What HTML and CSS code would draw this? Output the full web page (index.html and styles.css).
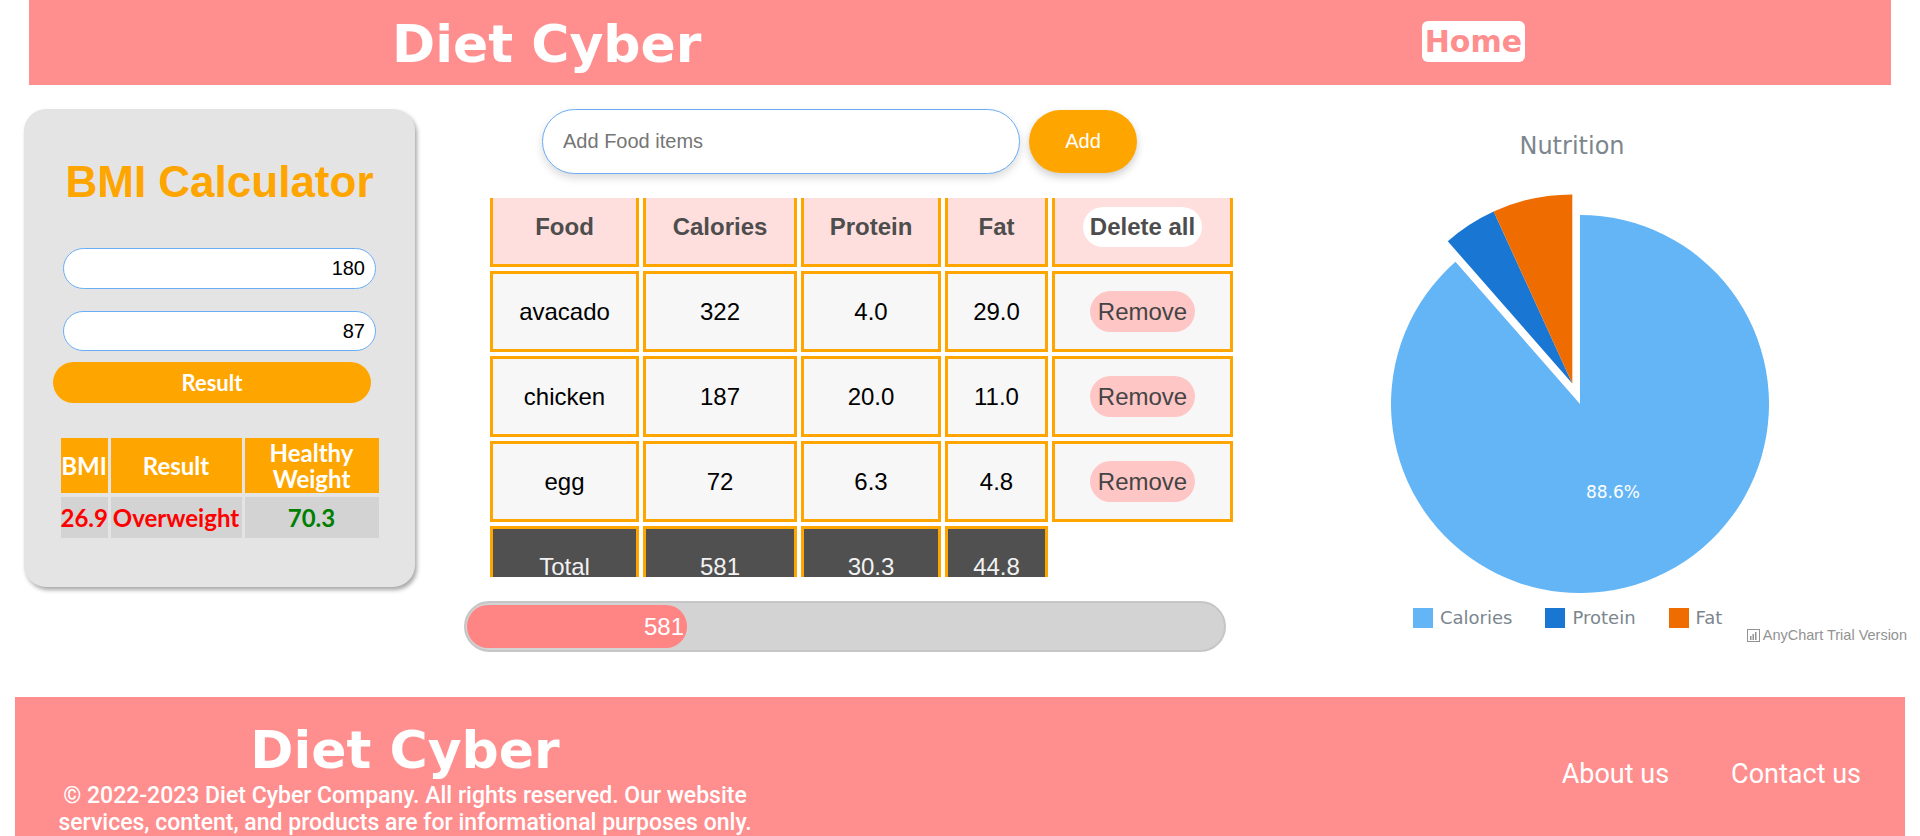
FILE: index.html
```html
<!DOCTYPE html>
<html lang="en">
<head>
<meta charset="utf-8">
<title>Diet Cyber</title>
<link rel="stylesheet" href="styles.css">
</head>
<body>
<header class="topbar">
  <h1 class="brand">Diet Cyber</h1>
  <a class="home-link" href="#">Home</a>
</header>

<main class="main">
  <section class="bmi-card">
    <h2 class="bmi-title">BMI Calculator</h2>
    <input class="bmi-input" type="text" value="180">
    <input class="bmi-input bmi-input-2" type="text" value="87">
    <button class="result-btn">Result</button>
    <table class="bmi-table">
      <tr><th class="c-bmi">BMI</th><th class="c-res">Result</th><th class="c-hw">Healthy Weight</th></tr>
      <tr><td class="red">26.9</td><td class="red">Overweight</td><td class="green">70.3</td></tr>
    </table>
  </section>

  <section class="food-col">
    <div class="food-form">
      <input class="food-input" type="text" placeholder="Add Food items">
      <button class="add-btn">Add</button>
    </div>
    <div class="table-wrap">
      <table class="food-table">
        <tr>
          <th class="w-food">Food</th>
          <th class="w-cal">Calories</th>
          <th class="w-pro">Protein</th>
          <th class="w-fat">Fat</th>
          <th class="w-del"><button class="delete-btn">Delete all</button></th>
        </tr>
        <tr><td>avacado</td><td>322</td><td>4.0</td><td>29.0</td><td><button class="remove-btn">Remove</button></td></tr>
        <tr><td>chicken</td><td>187</td><td>20.0</td><td>11.0</td><td><button class="remove-btn">Remove</button></td></tr>
        <tr><td>egg</td><td>72</td><td>6.3</td><td>4.8</td><td><button class="remove-btn">Remove</button></td></tr>
        <tr class="total-row"><td>Total</td><td>581</td><td>30.3</td><td>44.8</td></tr>
      </table>
    </div>
    <div class="progress"><div class="progress-bar" style="width:220px">581</div></div>
  </section>

  <section class="chart-col">
    <div class="chart-title">Nutrition</div>
    <svg class="pie" width="400" height="420" viewBox="0 0 400 420">
      <path fill="#64b5f6" d="M200,220 L200,31 A189,189 0 1,1 75.47,77.83 Z"/>
      <path fill="#1976d2" d="M192.3,199.4 L67.77,57.23 A189,189 0 0,1 113.68,27.52 Z"/>
      <path fill="#ef6c00" d="M192.3,199.4 L113.68,27.52 A189,189 0 0,1 192.3,10.4 Z"/>
      <text class="pie-label" x="233" y="308">88.6%</text>
    </svg>
    <div class="legend-row">
      <div class="legend-item"><span class="swatch sw-cal"></span>Calories</div>
      <div class="legend-item"><span class="swatch sw-pro"></span>Protein</div>
      <div class="legend-item legend-last"><span class="swatch sw-fat"></span>Fat</div>
      <div class="trial">
        <svg width="13" height="13" viewBox="0 0 13 13"><rect x="0.5" y="0.5" width="12" height="12" fill="none" stroke="#929292"/><rect x="3" y="7" width="1.5" height="4" fill="#929292"/><rect x="5.5" y="5" width="1.5" height="6" fill="#929292"/><rect x="8" y="3" width="1.5" height="8" fill="#929292"/></svg>
        <span>AnyChart Trial Version</span>
      </div>
    </div>
  </section>
</main>

<footer class="site-footer">
  <div class="footer-brand-col">
    <div class="footer-brand">Diet Cyber</div>
    <p class="copyright">© 2022-2023 Diet Cyber Company. All rights reserved. Our website services, content, and products are for informational purposes only.</p>
  </div>
  <nav class="footer-nav">
    <a href="#">About us</a>
    <a href="#">Contact us</a>
  </nav>
</footer>
</body>
</html>
```

FILE: styles.css
```css
body {
  margin: 0;
  font-family: "Liberation Sans", Arial, sans-serif;
  background: #fff;
}

/* Header */
.topbar {
  margin: 0 29px;
  height: 85px;
  box-sizing: border-box;
  padding: 3px 366px 0 363px;
  background: #ff8e8e;
  display: flex;
  align-items: center;
  justify-content: space-between;
}
.brand {
  margin: 0;
  font-family: "DejaVu Sans", sans-serif;
  font-weight: bold;
  font-size: 52px;
  line-height: 60px;
  color: #fff;
}
.home-link {
  display: block;
  height: 41px;
  padding: 0 3px;
  margin-bottom: 5px;
  background: #fff;
  color: #ff8e8e;
  border-radius: 6px;
  font-family: "DejaVu Sans", sans-serif;
  font-weight: bold;
  font-size: 30px;
  line-height: 41px;
  text-decoration: none;
}

/* Main layout */
.main {
  display: flex;
  align-items: flex-start;
  margin-top: 24px;
}

/* BMI card */
.bmi-card {
  flex-shrink: 0;
  margin-left: 24px;
  width: 391px;
  box-sizing: border-box;
  padding: 51px 0 45px;
  background: #e4e4e4;
  border-radius: 22px;
  box-shadow: 2px 3px 4px rgba(0, 0, 0, 0.35);
  display: flex;
  flex-direction: column;
  align-items: center;
}
.bmi-title {
  margin: 0;
  font-family: "Liberation Sans", Arial, sans-serif;
  font-weight: bold;
  font-size: 44px;
  line-height: 44px;
  color: #ffa500;
}
.bmi-input {
  margin-top: 44px;
  width: 313px;
  height: 41px;
  box-sizing: border-box;
  border: 1px solid #6aaef5;
  border-radius: 21px;
  background: #fff;
  padding: 0 10px;
  text-align: right;
  font-family: "Liberation Sans", Arial, sans-serif;
  font-size: 20px;
  color: #000;
  outline: none;
}
.bmi-input-2 {
  margin-top: 22px;
  height: 40px;
}
.result-btn {
  margin-top: 11px;
  margin-right: 15px;
  width: 318px;
  height: 41px;
  padding: 0;
  border: none;
  border-radius: 21px;
  background: #ffa500;
  color: #fff;
  font-family: "Lato", sans-serif;
  font-weight: bold;
  font-size: 22px;
}
.bmi-table {
  margin-top: 31px;
  width: 324px;
  table-layout: fixed;
  border-collapse: separate;
  border-spacing: 3px 4px;
}
.bmi-table th,
.bmi-table td {
  padding: 0;
  text-align: center;
  font-family: "Lato", sans-serif;
  font-weight: bold;
  font-size: 24px;
  line-height: 26px;
}
.bmi-table th {
  height: 55px;
  background: #ffa500;
  color: #fff;
}
.bmi-table td {
  height: 41px;
  background: #d3d3d3;
  white-space: nowrap;
}
.c-bmi { width: 47px; }
.c-res { width: 131px; }
.c-hw { width: 134px; }
.red { color: #ff0000; }
.green { color: #008000; }

/* Food column */
.food-col {
  flex-shrink: 0;
  margin-left: 48px;
  width: 771px;
}
.food-form {
  display: flex;
  align-items: center;
  padding-left: 79px;
}
.food-input {
  width: 478px;
  height: 65px;
  box-sizing: border-box;
  border: 1px solid #6aaef5;
  border-radius: 33px;
  padding: 0 20px;
  font-family: "Liberation Sans", Arial, sans-serif;
  font-size: 20px;
  box-shadow: 0 4px 8px rgba(0, 0, 0, 0.15);
  outline: none;
}
.food-input::placeholder {
  color: #757575;
}
.add-btn {
  margin-left: 9px;
  width: 108px;
  height: 63px;
  border: none;
  border-radius: 32px;
  background: #ffa500;
  color: #fff;
  font-family: "Liberation Sans", Arial, sans-serif;
  font-size: 20px;
  box-shadow: 0 4px 8px rgba(0, 0, 0, 0.2);
}
.table-wrap {
  margin: 24px 0 0 23px;
  width: 751px;
  height: 379px;
  overflow: hidden;
}
.food-table {
  margin-top: -15px;
  width: 751px;
  table-layout: fixed;
  border-collapse: separate;
  border-spacing: 4px;
}
.food-table th,
.food-table td {
  box-sizing: border-box;
  border: 3px solid #ffa500;
  padding: 0;
  text-align: center;
  vertical-align: middle;
  font-family: "Liberation Sans", Arial, sans-serif;
  font-size: 24px;
}
.food-table th {
  height: 80px;
  background: #ffdede;
  color: #4d4d4d;
  font-weight: bold;
}
.food-table td {
  height: 81px;
  background: #f7f7f7;
  color: #000;
}
.food-table .total-row td {
  background: #505050;
  color: #f2f2f2;
}
.w-food { width: 149px; }
.w-cal { width: 154px; }
.w-pro { width: 140px; }
.w-fat { width: 103px; }
.w-del { width: 181px; }
.delete-btn {
  height: 40px;
  padding: 0 7px;
  border: none;
  border-radius: 20px;
  background: #fff;
  color: #4d4d4d;
  font-family: "Liberation Sans", Arial, sans-serif;
  font-weight: bold;
  font-size: 24px;
}
.remove-btn {
  height: 41px;
  padding: 0 8px;
  border: none;
  border-radius: 21px;
  background: #ffc6c6;
  color: #444;
  font-family: "Liberation Sans", Arial, sans-serif;
  font-size: 24px;
}
.progress {
  margin: 24px 0 0 1px;
  width: 762px;
  height: 51px;
  box-sizing: border-box;
  padding: 2px 1px;
  background: #d3d3d3;
  border: 2px solid #c6c6c6;
  border-radius: 26px;
}
.progress-bar {
  height: 100%;
  box-sizing: border-box;
  padding-right: 3px;
  background: #ff8585;
  border-radius: 21px;
  color: #fff;
  text-align: right;
  font-family: "Liberation Sans", Arial, sans-serif;
  font-size: 24px;
  line-height: 43px;
}

/* Chart column */
.chart-col {
  flex-shrink: 0;
  margin-left: 16px;
  width: 660px;
  display: flex;
  flex-direction: column;
  align-items: center;
}
.chart-title {
  margin-top: 22px;
  margin-right: 16px;
  font-family: "DejaVu Sans", sans-serif;
  font-size: 24px;
  line-height: 30px;
  color: #7c868e;
}
.pie {
  display: block;
  margin-top: 23px;
}
.pie-label {
  font-family: "DejaVu Sans", sans-serif;
  font-size: 17px;
  fill: #fff;
  text-anchor: middle;
  dominant-baseline: central;
}
.legend-row {
  align-self: stretch;
  margin: 3px 0 0 163px;
  display: flex;
  align-items: flex-start;
}
.legend-item {
  display: flex;
  align-items: center;
  gap: 7px;
  height: 22px;
  margin-right: 33px;
  font-family: "DejaVu Sans", sans-serif;
  font-size: 18px;
  line-height: 22px;
  color: #7c868e;
}
.legend-last { margin-right: 0; }
.swatch {
  display: block;
  width: 20px;
  height: 20px;
}
.sw-cal { background: #64b5f6; }
.sw-pro { background: #1976d2; }
.sw-fat { background: #ef6c00; }
.trial {
  margin: 20px 3px 0 auto;
  display: flex;
  align-items: center;
  gap: 3px;
  font-family: "Liberation Sans", Arial, sans-serif;
  font-size: 14.5px;
  line-height: 16px;
  color: #929292;
}

/* Footer */
.site-footer {
  margin: 45px 15px 0;
  padding: 23px 44px 20px 30px;
  background: #ff8e8e;
  color: #fff;
  display: flex;
  align-items: flex-start;
}
.footer-brand-col {
  width: 720px;
  text-align: center;
}
.footer-brand {
  font-family: "DejaVu Sans", sans-serif;
  font-weight: bold;
  font-size: 52px;
  line-height: 60px;
}
.copyright {
  margin: 2px 0 0;
  font-family: Roboto, sans-serif;
  font-weight: 500;
  font-size: 23px;
  line-height: 27px;
}
.footer-nav {
  margin-left: auto;
  margin-top: 38px;
  display: flex;
  gap: 62px;
}
.footer-nav a {
  color: #fff;
  text-decoration: none;
  font-family: Roboto, sans-serif;
  font-size: 27px;
  line-height: 32px;
}
```
